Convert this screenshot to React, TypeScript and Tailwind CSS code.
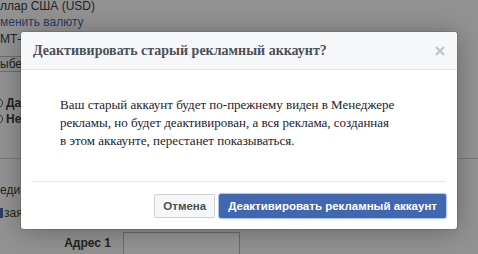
import React from "react";

export default function App() {
  return (
    <div className="relative w-[478px] h-[254px] overflow-hidden bg-[#929292] font-['Liberation_Sans'] text-[12px] text-[#232323]">
      {/* background page (dimmed) */}
      <div className="flex flex-col">
        <div className="mt-[-2px] h-[16px] leading-[16px] whitespace-nowrap">ллар США (USD)</div>
        <div className="h-[16px] leading-[16px] whitespace-nowrap text-[#2c3b63]">менить валюту</div>
        <div className="mt-[1px] h-[16px] leading-[16px] whitespace-nowrap">МТ-(</div>
        <div className="mt-[9px] ml-[-6px] w-[40px] h-[16px] border border-[#6e6e6e] bg-[#8e8e8e] leading-[14px] pl-[5px] whitespace-nowrap">ыбер</div>
        <div className="mt-[23px] h-[16px] flex items-center gap-[3px] ml-[-7px] font-bold">
          <span className="w-[10px] h-[10px] rounded-full border border-[#333]"></span>
          <span>Да</span>
        </div>
        <div className="h-[16px] flex items-center gap-[3px] ml-[-7px] font-bold">
          <span className="w-[10px] h-[10px] rounded-full border border-[#333]"></span>
          <span>Не</span>
        </div>
        <div className="mt-[31px] h-px bg-[#7a7a7a] w-full"></div>
        <div className="mt-[23px] h-[16px] leading-[16px] whitespace-nowrap">еди</div>
        <div className="mt-[7px] h-[16px] leading-[16px] whitespace-nowrap flex items-center">
          <span className="w-[3px] h-[10px] bg-[#2c3b63] mr-[1px]"></span>
          <span>зая</span>
        </div>
        <div className="mt-[11px] flex items-start">
          <div className="w-[111px] text-right font-bold text-[12px] leading-[22px]">Адрес 1</div>
          <div className="ml-[12px] w-[117px] h-[24px] border border-[#6c6c6c] bg-[#949494]"></div>
        </div>
      </div>

      {/* dialog */}
      <div className="absolute left-[21px] top-[32px] w-[436px] bg-white rounded-[3px] overflow-hidden shadow-[0_2px_26px_rgba(0,0,0,0.3),0_0_0_1px_rgba(0,0,0,0.1)]">
        <div className="h-[38px] bg-[#f6f7f9] border-b border-[#e5e5e5] flex items-center justify-between pl-[12px] pr-[12px]">
          <span className="font-['Liberation_Serif'] font-bold text-[14px] text-[#4b4f56] whitespace-nowrap">
            Деактивировать старый рекламный аккаунт?
          </span>
          <svg width="10" height="10" viewBox="0 0 10 10" className="block">
            <path d="M1 1 L9 9 M9 1 L1 9" stroke="#bec2c9" strokeWidth="2" strokeLinecap="butt" />
          </svg>
        </div>
        <div className="pt-[26px] pb-[31px] px-[39px] font-['Liberation_Serif'] text-[13px] leading-[18px] text-[#1d2129] whitespace-nowrap">
          Ваш старый аккаунт будет по-прежнему виден в Менеджере
          <br />
          рекламы, но будет деактивирован, а вся реклама, созданная
          <br />
          в этом аккаунте, перестанет показываться.
        </div>
        <div className="mx-[11px] border-t border-[#e5e5e5] pt-[12px] pb-[11px] flex justify-end gap-[4px]">
          <button className="h-[24px] px-[8px] border border-[#ced0d4] bg-[#f6f7f9] rounded-[2px] text-[#4b4f56] font-bold text-[11.5px] leading-[22px] font-['Liberation_Sans']">
            Отмена
          </button>
          <button className="h-[24px] px-[8px] border border-[#4267b2] bg-[#4267b2] rounded-[2px] text-white font-bold text-[11.5px] leading-[22px] font-['Liberation_Sans'] shadow-[0_0_1px_1px_rgba(106,152,217,0.6)]">
            Деактивировать рекламный аккаунт
          </button>
        </div>
      </div>
    </div>
  );
}
